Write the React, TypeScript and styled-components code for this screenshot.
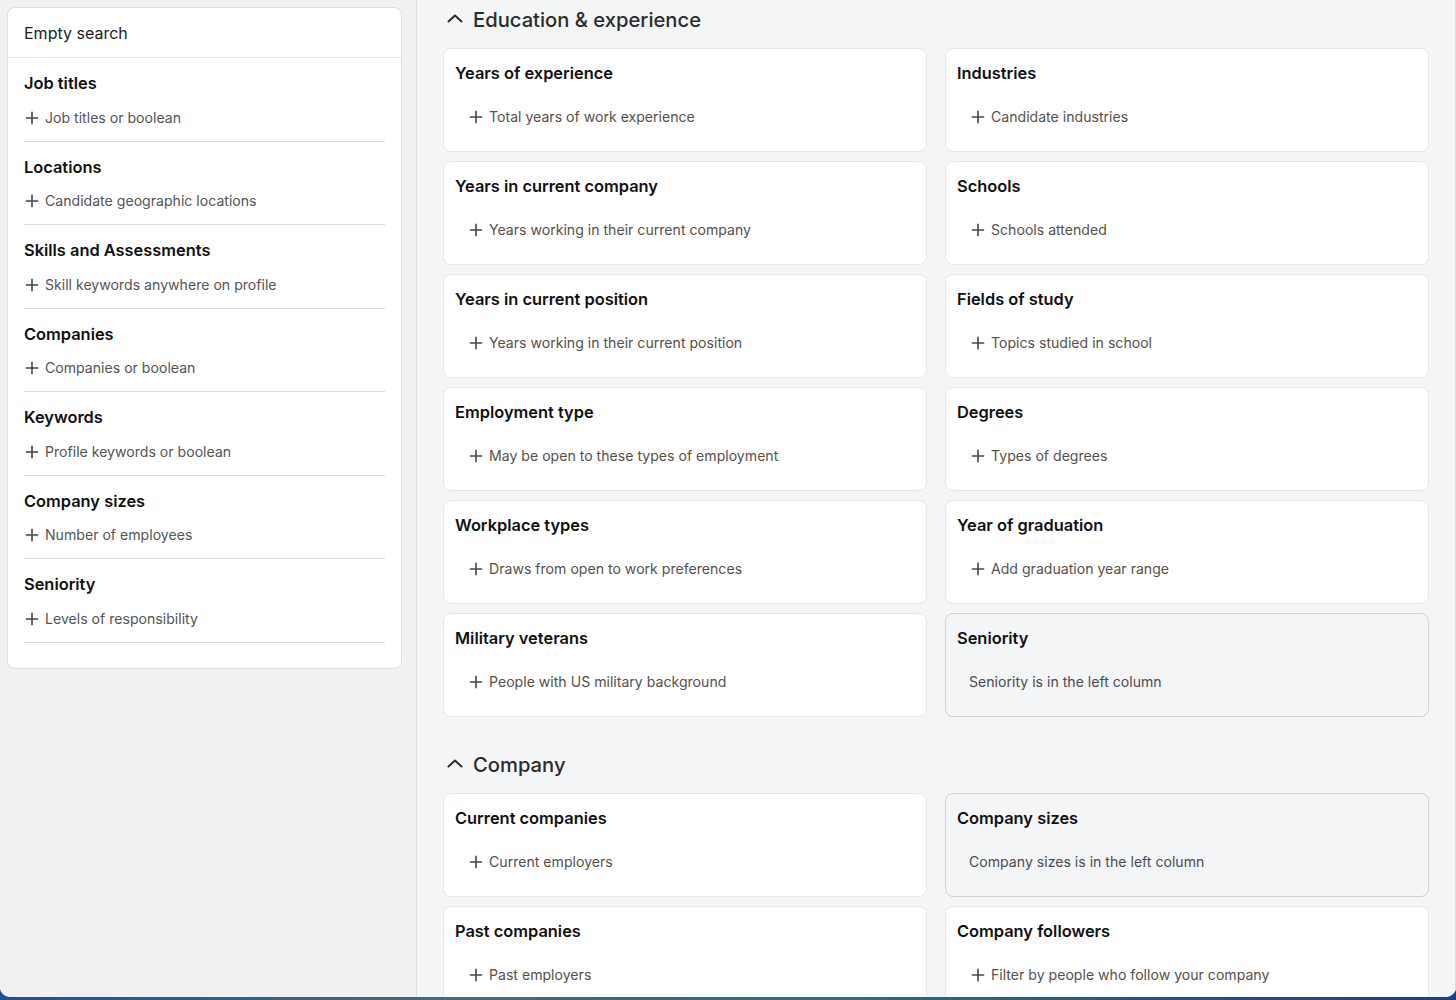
import React from "react";
import styled, { createGlobalStyle } from "styled-components";

const GlobalStyle = createGlobalStyle`
  html, body {
    margin: 0;
    padding: 0;
    background: #f2f1ef;
    font-family: Inter, "Noto Sans", "Liberation Sans", sans-serif;
    -webkit-font-smoothing: antialiased;
  }
  * { box-sizing: border-box; }
`;

const Window = styled.div`
  width: 1456px;
  height: 1000px;
  display: flex;
  flex-direction: column;
  overflow: hidden;
  background: linear-gradient(90deg, #1d4f9a 0%, #3d6d7c 30%, #2f6a78 60%, #1a3f8c 100%);
`;

const Main = styled.div`
  display: flex;
  height: 997px;
  background: #f2f1ef;
  border-bottom-left-radius: 10px;
  border-bottom-right-radius: 10px;
  overflow: hidden;
`;

const Sidebar = styled.aside`
  width: 417px;
  flex-shrink: 0;
  padding: 7px 14px 0 7px;
  border-right: 1px solid #dcdbd8;
  background: #f2f1ef;
`;

const SideCard = styled.div`
  background: #fff;
  border: 1px solid #dedede;
  border-radius: 8px;
  padding-bottom: 25px;
`;

const SideHeader = styled.div`
  height: 50px;
  display: flex;
  align-items: center;
  padding-left: 16px;
  font-size: 16px;
  color: #1d1d1d;
  border-bottom: 1px solid #e6e6e6;
`;

const SideSection = styled.div`
  margin: 0 16px;
  padding: 15px 0 13px 0;
  border-bottom: 1px solid #dadada;
`;

const SectionTitle = styled.div`
  font-size: 16.4px;
  line-height: 20px;
  font-weight: 600;
  color: #111;
`;

const AddRow = styled.div<{ $indent?: number; $color?: string }>`
  display: flex;
  align-items: center;
  gap: 6px;
  margin-top: 14.5px;
  padding-left: ${(p) => p.$indent ?? 1}px;
  font-size: 14.1px;
  line-height: 20px;
  color: ${(p) => p.$color ?? "#555"};
`;

const Content = styled.main`
  flex: 1;
  padding: 0 26px 0 26px;
  background: #f4f5f7;
  border-right: 1px solid #dcdcdc;
`;

const GroupHeader = styled.div<{ $top?: number }>`
  height: 38px;
  margin-top: ${(p) => p.$top ?? 0}px;
  margin-bottom: 10px;
  display: flex;
  align-items: center;
  gap: 10px;
  padding-left: 4px;
  font-size: 20.2px;
  font-weight: 500;
  color: #2b2b2b;
`;

const CardGrid = styled.div`
  display: grid;
  grid-template-columns: 1fr 1fr;
  column-gap: 18px;
  row-gap: 9px;
`;

const FilterCard = styled.div<{ $disabled?: boolean }>`
  height: 104px;
  padding: 14px 12px 0 11px;
  border-radius: 8px;
  background: ${(p) => (p.$disabled ? "#f4f5f7" : "#fff")};
  border: 1px solid ${(p) => (p.$disabled ? "#cfd0d2" : "#e6e7e9")};
`;

const Note = styled.div`
  margin-top: 24px;
  padding-left: 12px;
  font-size: 14.1px;
  line-height: 20px;
  color: #4d4d4d;
`;

const Plus = ({ color = "#444" }: { color?: string }) => (
  <svg width="14" height="14" viewBox="0 0 14 14" fill="none">
    <path d="M7 0.8V13.2M0.8 7H13.2" stroke={color} strokeWidth="1.6" />
  </svg>
);

const Chevron = () => (
  <svg width="16" height="16" viewBox="0 0 16 16" fill="none">
    <path d="M1.5 10.5L8 4.5L14.5 10.5" stroke="#2b2b2b" strokeWidth="2" strokeLinecap="round" strokeLinejoin="round" />
  </svg>
);

const sideFilters = [
  ["Job titles", "Job titles or boolean"],
  ["Locations", "Candidate geographic locations"],
  ["Skills and Assessments", "Skill keywords anywhere on profile"],
  ["Companies", "Companies or boolean"],
  ["Keywords", "Profile keywords or boolean"],
  ["Company sizes", "Number of employees"],
  ["Seniority", "Levels of responsibility"],
];

type Filter = { title: string; hint: string; disabled?: boolean };

const education: Filter[] = [
  { title: "Years of experience", hint: "Total years of work experience" },
  { title: "Industries", hint: "Candidate industries" },
  { title: "Years in current company", hint: "Years working in their current company" },
  { title: "Schools", hint: "Schools attended" },
  { title: "Years in current position", hint: "Years working in their current position" },
  { title: "Fields of study", hint: "Topics studied in school" },
  { title: "Employment type", hint: "May be open to these types of employment" },
  { title: "Degrees", hint: "Types of degrees" },
  { title: "Workplace types", hint: "Draws from open to work preferences" },
  { title: "Year of graduation", hint: "Add graduation year range" },
  { title: "Military veterans", hint: "People with US military background" },
  { title: "Seniority", hint: "Seniority is in the left column", disabled: true },
];

const company: Filter[] = [
  { title: "Current companies", hint: "Current employers" },
  { title: "Company sizes", hint: "Company sizes is in the left column", disabled: true },
  { title: "Past companies", hint: "Past employers" },
  { title: "Company followers", hint: "Filter by people who follow your company" },
];

function Cards({ items }: { items: Filter[] }) {
  return (
    <CardGrid>
      {items.map((f) => (
        <FilterCard key={f.title} $disabled={f.disabled}>
          <SectionTitle>{f.title}</SectionTitle>
          {f.disabled ? (
            <Note>{f.hint}</Note>
          ) : (
            <AddRow $indent={14} $color="#56514b" style={{ marginTop: 24 }}>
              <Plus color="#4a4641" />
              {f.hint}
            </AddRow>
          )}
        </FilterCard>
      ))}
    </CardGrid>
  );
}

export default function App() {
  return (
    <>
      <GlobalStyle />
      <Window>
        <Main>
          <Sidebar>
            <SideCard>
              <SideHeader>Empty search</SideHeader>
              {sideFilters.map(([title, hint]) => (
                <SideSection key={title}>
                  <SectionTitle>{title}</SectionTitle>
                  <AddRow>
                    <Plus />
                    {hint}
                  </AddRow>
                </SideSection>
              ))}
            </SideCard>
          </Sidebar>
          <Content>
            <GroupHeader>
              <Chevron />
              Education &amp; experience
            </GroupHeader>
            <Cards items={education} />
            <GroupHeader $top={28}>
              <Chevron />
              Company
            </GroupHeader>
            <Cards items={company} />
          </Content>
        </Main>
      </Window>
    </>
  );
}
